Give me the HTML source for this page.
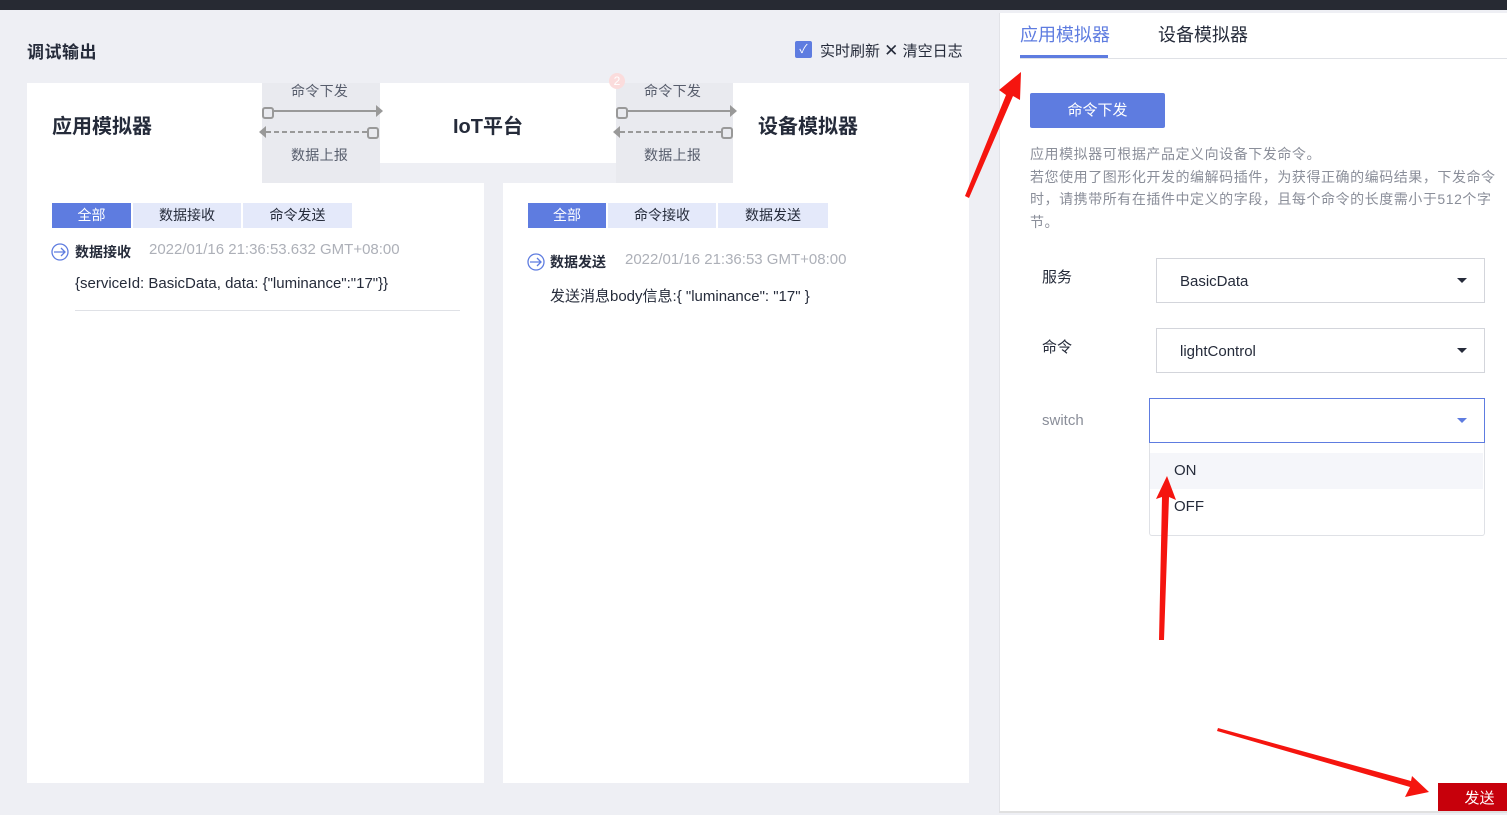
<!DOCTYPE html>
<html><head><meta charset="utf-8"><style>
*{margin:0;padding:0;box-sizing:border-box}
body{width:1507px;height:813px;overflow:hidden;background:#eeeff4;font-family:"Liberation Sans","Noto Sans CJK SC",sans-serif;position:relative;color:#252b3a}
.a{position:absolute}
.w{background:#fff}
.t{font-size:14px;color:#575d6c;letter-spacing:0.3px}
.tab{position:absolute;height:25px;font-size:14px;line-height:25px;text-align:center;background:#e4e9fa;color:#252b3a}
.tab.on{background:#5e7ce0;color:#fff}
.sel{position:absolute;border:1px solid #d3d5db;background:#fff;font-size:15px;line-height:45px;padding-left:23px;color:#252b3a}
.tri{position:absolute;right:17px;top:19px;width:0;height:0;border-left:5px solid transparent;border-right:5px solid transparent;border-top:5px solid #252b3a}
</style></head><body>
<div class="a" style="left:0;top:0;width:1507px;height:10px;background:#272a33"></div>
<div class="a" style="left:27px;top:38px;font-size:17px;font-weight:bold;letter-spacing:0.5px">调试输出</div>
<div class="a" style="left:795px;top:41px;width:17px;height:17px;background:#5e7ce0;border-radius:2px;color:#fff;font-size:12px;text-align:center;line-height:17px">✓</div>
<div class="a" style="left:820px;top:40px;font-size:15px;color:#252b3a">实时刷新 <span style="font-size:17px">✕</span> 清空日志</div>

<div class="a w" style="left:27px;top:83px;width:235px;height:100px"></div>
<div class="a w" style="left:27px;top:183px;width:457px;height:600px"></div>
<div class="a" style="left:262px;top:83px;width:118px;height:100px;background:#e9eaef"></div>
<div class="a w" style="left:380px;top:83px;width:236px;height:80px"></div>
<div class="a" style="left:616px;top:83px;width:117px;height:100px;background:#e9eaef"></div>
<div class="a w" style="left:733px;top:83px;width:236px;height:100px"></div>
<div class="a w" style="left:503px;top:183px;width:466px;height:600px"></div>

<div class="a" style="left:52px;top:110px;font-size:20px;font-weight:bold">应用模拟器</div>
<div class="a" style="left:453px;top:110px;font-size:20px;font-weight:bold">IoT平台</div>
<div class="a" style="left:758px;top:110px;font-size:20px;font-weight:bold">设备模拟器</div>
<div class="a" style="left:609px;top:73px;width:16px;height:16px;border-radius:50%;background:#fbdcdc;color:#fff;font-size:12px;text-align:center;line-height:16px">2</div>

<svg class="a" style="left:258px;top:100px" width="130" height="42"><g stroke="#999" stroke-width="2" fill="none"><rect x="5" y="8" width="10" height="10" rx="2"/><line x1="15" y1="11" x2="120" y2="11"/><line x1="8" y1="32" x2="110" y2="32" stroke-dasharray="5 3"/><rect x="110" y="28" width="10" height="10" rx="2"/></g><path d="M118 5 L125 11 L118 17Z M8 26 L1 32 L8 38Z" fill="#999"/></svg>
<svg class="a" style="left:612px;top:100px" width="130" height="42"><g stroke="#999" stroke-width="2" fill="none"><rect x="5" y="8" width="10" height="10" rx="2"/><line x1="15" y1="11" x2="120" y2="11"/><line x1="8" y1="32" x2="110" y2="32" stroke-dasharray="5 3"/><rect x="110" y="28" width="10" height="10" rx="2"/></g><path d="M118 5 L125 11 L118 17Z M8 26 L1 32 L8 38Z" fill="#999"/></svg>
<div class="a t" style="left:291px;top:81px">命令下发</div>
<div class="a t" style="left:291px;top:145px">数据上报</div>
<div class="a t" style="left:644px;top:81px">命令下发</div>
<div class="a t" style="left:644px;top:145px">数据上报</div>

<div class="tab on" style="left:52px;top:203px;width:79px">全部</div>
<div class="tab" style="left:133px;top:203px;width:108px">数据接收</div>
<div class="tab" style="left:243px;top:203px;width:109px">命令发送</div>
<div class="tab on" style="left:528px;top:203px;width:78px">全部</div>
<div class="tab" style="left:608px;top:203px;width:108px">命令接收</div>
<div class="tab" style="left:718px;top:203px;width:110px">数据发送</div>

<svg class="a" style="left:51px;top:243px" width="18" height="18"><circle cx="9" cy="9" r="8" fill="none" stroke="#5e7ce0" stroke-width="1.3"/><path d="M3 9H14M10 5L14 9L10 13" fill="none" stroke="#5e7ce0" stroke-width="1.3"/></svg>
<div class="a" style="left:75px;top:242px;font-size:14px;font-weight:bold">数据接收</div>
<div class="a" style="left:149px;top:241px;font-size:15px;color:#adb0b8">2022/01/16 21:36:53.632 GMT+08:00</div>
<div class="a" style="left:75px;top:275px;font-size:15px">{serviceId: BasicData, data: {"luminance":"17"}}</div>
<div class="a" style="left:75px;top:310px;width:385px;height:1px;background:#dfe1e6"></div>

<svg class="a" style="left:527px;top:253px" width="18" height="18"><circle cx="9" cy="9" r="8" fill="none" stroke="#5e7ce0" stroke-width="1.3"/><path d="M3 9H14M10 5L14 9L10 13" fill="none" stroke="#5e7ce0" stroke-width="1.3"/></svg>
<div class="a" style="left:550px;top:252px;font-size:14px;font-weight:bold">数据发送</div>
<div class="a" style="left:625px;top:251px;font-size:15px;color:#adb0b8">2022/01/16 21:36:53 GMT+08:00</div>
<div class="a" style="left:550px;top:285px;font-size:15px">发送消息body信息:{ "luminance": "17" }</div>

<!-- right panel -->
<div class="a w" style="left:999px;top:13px;width:508px;height:800px;border-left:1px solid #e2e3e8"></div>
<div class="a" style="left:1020px;top:21px;font-size:18px;color:#5e7ce0">应用模拟器</div>
<div class="a" style="left:1158px;top:21px;font-size:18px;color:#252b3a">设备模拟器</div>
<div class="a" style="left:1020px;top:58px;width:487px;height:1px;background:#dfe1e6"></div>
<div class="a" style="left:1020px;top:55px;width:88px;height:3px;background:#5e7ce0"></div>
<div class="a" style="left:1030px;top:93px;width:135px;height:35px;background:#5e7ce0;color:#fff;font-size:15px;text-align:center;line-height:35px;border-radius:2px">命令下发</div>
<div class="a" style="left:1030px;top:143px;width:520px;font-size:14px;letter-spacing:0.55px;line-height:22.5px;color:#8a8e99;white-space:nowrap">应用模拟器可根据产品定义向设备下发命令。<br>若您使用了图形化开发的编解码插件，为获得正确的编码结果，下发命令<br>时，请携带所有在插件中定义的字段，且每个命令的长度需小于512个字<br>节。</div>
<div class="a" style="left:1042px;top:266px;font-size:15px">服务</div>
<div class="sel" style="left:1156px;top:258px;width:329px;height:45px">BasicData<div class="tri"></div></div>
<div class="a" style="left:1042px;top:336px;font-size:15px">命令</div>
<div class="sel" style="left:1156px;top:328px;width:329px;height:45px">lightControl<div class="tri"></div></div>
<div class="a" style="left:1042px;top:412px;font-size:15px;color:#8a8e99">switch</div>
<div class="sel" style="left:1149px;top:398px;width:336px;height:45px;border-color:#5e7ce0"><div class="tri" style="border-top-color:#5e7ce0"></div></div>
<div class="a w" style="left:1149px;top:443px;width:336px;height:93px;border:1px solid #dfe1e6;border-top:none;border-radius:0 0 3px 3px"></div>
<div class="a" style="left:1150px;top:453px;width:333px;height:36px;background:#f5f6fa"></div>
<div class="a" style="left:1174px;top:462px;font-size:15px">ON</div>
<div class="a" style="left:1174px;top:498px;font-size:15px">OFF</div>
<div class="a" style="left:1438px;top:783px;width:69px;height:29px;background:#c7000b;color:#fff;font-size:15px;text-align:center;line-height:32px;padding-left:14px">发送</div>
<div class="a" style="left:999px;top:811px;width:508px;height:2px;background:#e0e0e0"></div>

<svg class="a" style="left:0;top:0" width="1507" height="813">
<g fill="#f5150f">
<path d="M965 196 L1006 95 L999 90 L1021 72 L1020 100 L1013 96 L969 198Z"/>
<path d="M1159 640 L1162 497 L1156 499 L1167 476 L1176 500 L1169 497 L1164 640Z"/>
<path d="M1217 731 L1410 787 L1405 797 L1429 792 L1412 776 L1411 781 L1218 728Z"/>
</g></svg>
</body></html>
